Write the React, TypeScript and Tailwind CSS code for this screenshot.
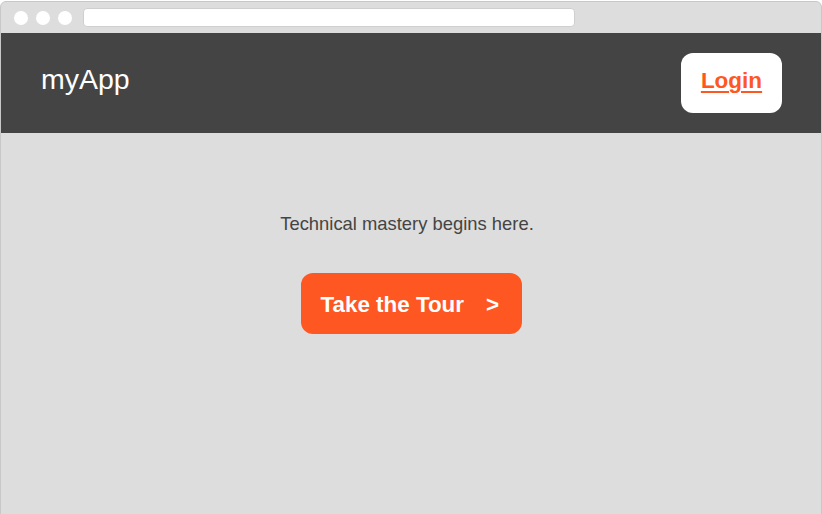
export default function App() {
  return (
    <div className="w-[822px] h-[514px] bg-white pt-[1px] overflow-hidden" style={{ fontFamily: '"Liberation Sans", Arial, sans-serif' }}>
      <div className="h-[520px] border border-[#c8c8c8] rounded-t-[6px] bg-[#dddddd] flex flex-col overflow-hidden">
        <div className="h-[31px] flex items-center pl-[13px] shrink-0">
          <div className="flex gap-[8px]">
            <div className="w-[14px] h-[14px] rounded-full bg-white" />
            <div className="w-[14px] h-[14px] rounded-full bg-white" />
            <div className="w-[14px] h-[14px] rounded-full bg-white" />
          </div>
          <div className="ml-[11px] w-[492px] h-[19px] bg-white rounded-[4px] border border-[#cfcfcf]" />
        </div>
        <div className="h-[100px] bg-[#444444] flex justify-between items-start pl-[40px] pr-[39px] shrink-0">
          <div className="pt-[30px] text-[28.5px] leading-[32px] text-white">myApp</div>
          <button className="mt-[20px] h-[60px] w-[101px] bg-white rounded-[12px] flex items-center justify-center pb-[4px] text-[22.5px] font-bold text-[#ff5722] underline underline-offset-[3px]">
            Login
          </button>
        </div>
        <div className="flex flex-col items-center pt-[77px]">
          <p className="text-[18.4px] text-[#444444] pr-[8px]">Technical mastery begins here.</p>
          <button className="mt-[35px] h-[61px] w-[221px] bg-[#ff5722] rounded-[12px] flex items-center pl-[20px] pt-[3px] text-[22.4px] font-bold text-white">
            <span>Take the Tour</span>
            <span className="ml-[22px]">&gt;</span>
          </button>
        </div>
      </div>
    </div>
  );
}
